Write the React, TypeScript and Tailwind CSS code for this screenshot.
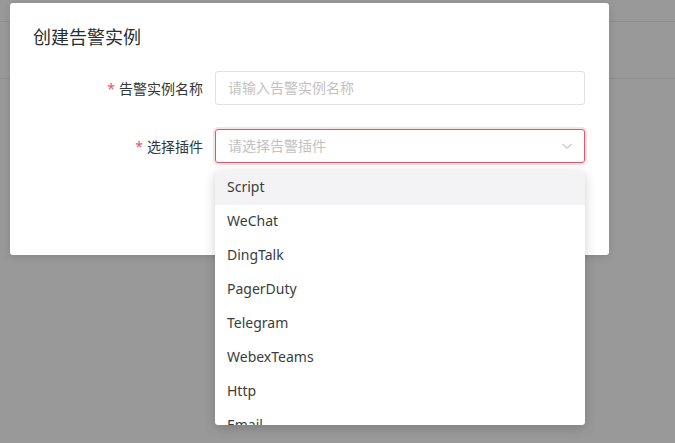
import React from "react";

const PLUGINS = ["Script", "WeChat", "DingTalk", "PagerDuty", "Telegram", "WebexTeams", "Http", "Email"];

const FONT = "font-['Noto_Sans','Noto_Sans_CJK_SC',sans-serif]";

function FormRow({ label, children }: { label: string; children: React.ReactNode }) {
  return (
    <div className="flex items-center">
      <label className="w-[182px] shrink-0 pr-3 text-right text-[14px] text-[#333639]">
        <span className="mr-1 text-[#e0566b]">*</span>
        {label}
      </label>
      {children}
    </div>
  );
}

export default function App() {
  return (
    <div className={`relative h-[443px] w-[675px] overflow-hidden bg-[#999999] ${FONT}`}>
      {/* page behind the mask */}
      <div className="h-[22px] border-b border-[#8e8e90]" />
      <div className="h-[57px] border-b border-[#8e8e90]" />

      {/* modal */}
      <div className="absolute left-[10px] top-[3px] h-[252px] w-[599px] rounded-[3px] bg-white pl-[23px] pr-[24px] pt-[21px] shadow-[0_2px_8px_rgba(0,0,0,0.12)]">
        <div className="text-[18px] leading-[26px] text-[#2a2d30]">创建告警实例</div>
        <div className="mt-[21px] flex flex-col gap-[24px]">
          <FormRow label="告警实例名称">
            <div className="flex h-[34px] flex-1 items-center rounded-[3px] border border-[#e0e0e6] px-3 pb-[1px] text-[14px] text-[#c2c2c2]">
              请输入告警实例名称
            </div>
          </FormRow>
          <FormRow label="选择插件">
            <div className="flex h-[34px] flex-1 items-center justify-between rounded-[3px] border border-[#e0566b] px-3 text-[14px] text-[#c2c2c2] shadow-[0_0_0_2px_rgba(224,86,107,0.18)]">
              <span className="pb-[1px]">请选择告警插件</span>
              <svg width="14" height="14" viewBox="0 0 16 16" fill="none" className="mr-[-2px]">
                <path d="M3 6l5 4.5L13 6" stroke="#c2c2c2" strokeWidth="1.2" strokeLinecap="round" strokeLinejoin="round" />
              </svg>
            </div>
          </FormRow>
        </div>
      </div>

      {/* select dropdown */}
      <div className="absolute left-[215px] top-[171px] h-[254px] w-[370px] overflow-hidden rounded-[3px] bg-white shadow-[0_3px_12px_rgba(0,0,0,0.18)]">
        {PLUGINS.map((name, i) => (
          <div
            key={name}
            className={`flex h-[34px] items-center px-3 pb-[3px] text-[14px] text-[#3a3d40] ${i === 0 ? "bg-[#f3f3f5]" : ""}`}
          >
            {name}
          </div>
        ))}
      </div>
    </div>
  );
}
